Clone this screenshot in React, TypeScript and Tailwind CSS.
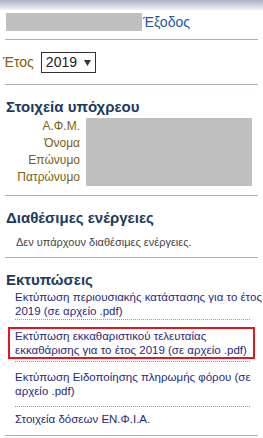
import React from 'react';

const Rule = ({ className = '' }: { className?: string }) => (
  <div className={`mx-[5px] h-px bg-[#a9b1be] ${className}`} />
);

const Heading = ({ children, className = '' }: { children: React.ReactNode; className?: string }) => (
  <h2 className={`px-[6px] h-[20px] leading-[20px] text-[15px] font-bold text-[#1b3a5c] ${className}`}>{children}</h2>
);

const rows = ['Α.Φ.Μ.', 'Όνομα', 'Επώνυμο', 'Πατρώνυμο'];

export default function App() {
  return (
    <div className="w-[263px] h-[438px] overflow-hidden bg-white font-['Liberation_Sans',Arial,sans-serif]">
      {/* top band */}
      <div className="h-[10px] bg-gradient-to-b from-[#aab2c0] to-[#f3f4f6]" />

      {/* user + logout */}
      <div className="mt-[3px] flex h-[18px] items-center pl-[6px]">
        <div className="h-[18px] w-[136px] bg-[#c0c0c0]" />
        <a className="ml-[1px] text-[14px] leading-[18px] text-[#1f56a8]">Έξοδος</a>
      </div>
      <Rule className="mt-[8px]" />

      {/* year */}
      <div className="mt-[12px] flex h-[21px] items-center pl-[3px]">
        <span className="text-[14px] text-[#7d5e0c]">Έτος</span>
        <div className="ml-[7px] flex h-[21px] w-[55px] items-center border border-[#333] pl-[4px] text-[14px] text-[#222]">
          2019
          <svg className="ml-[7px]" width="7" height="6" viewBox="0 0 7 6">
            <path d="M0 0h7L3.5 6z" fill="#333" />
          </svg>
        </div>
      </div>
      <Rule className="mt-[11px]" />

      {/* taxpayer */}
      <Heading className="mt-[12px]">Στοιχεία υπόχρεου</Heading>
      <div className="mt-[1px] flex">
        <div className="w-[80px] text-right">
          {rows.map((r) => (
            <div key={r} className="h-[17px] text-[12px] leading-[17px] text-[#7d5e0c]">{r}</div>
          ))}
        </div>
        <div className="ml-[6px] h-[68px] w-[166px] bg-[#c0c0c0]" />
      </div>
      <Rule className="mt-[9px]" />

      {/* actions */}
      <Heading className="mt-[12px]">Διαθέσιμες ενέργειες</Heading>
      <p className="mt-[7px] h-[14px] pl-[16px] text-[11px] leading-[14px] text-[#444]">Δεν υπάρχουν διαθέσιμες ενέργειες.</p>
      <Rule className="mt-[8px]" />

      {/* prints */}
      <Heading className="mt-[12px]">Εκτυπώσεις</Heading>
      <ul className="whitespace-nowrap text-[11.5px] leading-[14px] text-[#1f2a7c]">
        <li className="ml-[15px] mr-[13px] border-b border-dotted border-[#999] pb-[1px]">
          <a>Εκτύπωση περιουσιακής κατάστασης για το έτος<br />2019 (σε αρχείο .pdf)</a>
        </li>
        <li className="pt-[7px] pb-[2px]">
          <a className="ml-[8px] block w-[247px] border-2 border-[#e8151d] pl-[5px]">
            Εκτύπωση εκκαθαριστικού τελευταίας<br />εκκαθάρισης για το έτος 2019 (σε αρχείο .pdf)
          </a>
        </li>
        <li className="ml-[15px] mr-[13px] border-t border-b border-dotted border-[#999] pt-[8px] pb-[8px]">
          <a>Εκτύπωση Ειδοποίησης πληρωμής φόρου (σε<br />αρχείο .pdf)</a>
        </li>
        <li className="pl-[15px] pt-[5px] pb-[9px]">
          <a>Στοιχεία δόσεων ΕΝ.Φ.Ι.Α.</a>
        </li>
      </ul>
      <Rule />
    </div>
  );
}
